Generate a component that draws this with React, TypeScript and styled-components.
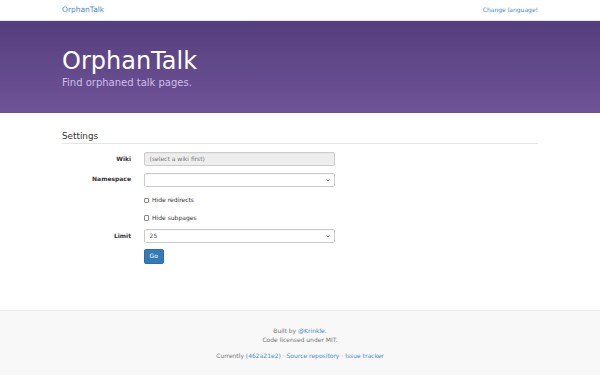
import styled, { createGlobalStyle } from 'styled-components'

const GlobalStyle = createGlobalStyle`
  html, body {
    margin: 0;
    padding: 0;
    background: #fff;
  }
  body {
    font-family: "DejaVu Sans", "Liberation Sans", sans-serif;
    font-size: 6px;
    line-height: 8.6px;
    color: #333;
  }
  * {
    box-sizing: border-box;
  }
`

const Page = styled.div`
  display: flex;
  flex-direction: column;
  min-height: 100vh;
`

const Container = styled.div`
  width: 476px;
  margin: 0 auto;
`

const Navbar = styled.nav`
  height: 21px;
  border-bottom: 1px solid #e7e7e7;
  background: #fff;
`

const NavInner = styled(Container)`
  display: flex;
  align-items: center;
  justify-content: space-between;
  height: 100%;
`

const Brand = styled.a`
  font-size: 7.5px;
  color: #4a8ac9;
  text-decoration: none;
`

const NavLink = styled.a`
  font-size: 6px;
  color: #4a8ac9;
  text-decoration: none;
`

const Jumbotron = styled.header`
  height: 92px;
  padding-top: 26.5px;
  background: linear-gradient(to bottom, #553e7d 0%, #6f5498 100%);
`

const Title = styled.h1`
  margin: 0;
  font-size: 24px;
  line-height: 26px;
  font-weight: normal;
  color: #fff;
`

const Lead = styled.p`
  margin: 2px 0 0;
  font-size: 10px;
  line-height: 13px;
  color: #cdbfe3;
`

const Main = styled.main`
  flex: 1;
  padding: 17px 0 45px;
`

const Legend = styled.h2`
  margin: 0 0 8.4px;
  font-size: 8.8px;
  line-height: 12.6px;
  font-weight: normal;
  color: #333;
  border-bottom: 1px solid #e5e5e5;
`

const FormRow = styled.div`
  display: grid;
  grid-template-columns: 69px 191px;
  column-gap: 12.6px;
  align-items: center;
  margin-bottom: 6.3px;
`

const Label = styled.label`
  text-align: right;
  font-weight: bold;
  color: #333;
`

const Control = styled.div<{ $disabled?: boolean }>`
  position: relative;
  height: 14.3px;
  padding: 0 5px;
  display: flex;
  align-items: center;
  border: 1px solid #ccc;
  border-radius: 1.8px;
  background: ${(p) => (p.$disabled ? '#eee' : '#fff')};
  color: ${(p) => (p.$disabled ? '#777' : '#555')};
  box-shadow: inset 0 0.5px 0.5px rgba(0, 0, 0, 0.075);
`

const Chevron = styled.svg`
  position: absolute;
  right: 3.5px;
  top: 50%;
  width: 4px;
  height: 2.5px;
  margin-top: -1px;
`

const CheckRow = styled.div`
  display: grid;
  grid-template-columns: 69px 191px;
  column-gap: 12.6px;
  padding-top: 2.9px;
  min-height: 11.3px;
  margin-bottom: 6.3px;
`

const CheckLabel = styled.label`
  grid-column: 2;
  display: flex;
  align-items: center;
  gap: 3px;
  color: #333;
`

const Box = styled.span`
  display: inline-block;
  width: 5.5px;
  height: 5.5px;
  border: 0.8px solid #888;
  border-radius: 1px;
  background: #fff;
`

const ButtonRow = styled.div`
  display: grid;
  grid-template-columns: 69px 191px;
  column-gap: 12.6px;
`

const Button = styled.button`
  grid-column: 2;
  justify-self: start;
  height: 14.3px;
  padding: 0 5px;
  font-family: inherit;
  font-size: 6px;
  line-height: 8.6px;
  color: #fff;
  background: #337ab7;
  border: 0.5px solid #2e6da4;
  border-radius: 1.8px;
`

const Footer = styled.footer`
  height: 65px;
  padding-top: 16px;
  background: #f8f8f8;
  border-top: 1px solid #eee;
  text-align: center;
  color: #777;
`

const FootLine = styled.p<{ $gap?: boolean }>`
  margin: ${(p) => (p.$gap ? '8px' : '0')} 0 0;
`

const FootLink = styled.a`
  color: #4a8ac9;
  text-decoration: none;
`

function SelectArrow() {
  return (
    <Chevron viewBox="0 0 10 6">
      <path d="M1 1l4 4 4-4" fill="none" stroke="#555" strokeWidth="1.8" />
    </Chevron>
  )
}

export default function App() {
  return (
    <Page>
      <GlobalStyle />
      <Navbar>
        <NavInner>
          <Brand href="#">OrphanTalk</Brand>
          <NavLink href="#">Change language!</NavLink>
        </NavInner>
      </Navbar>
      <Jumbotron>
        <Container>
          <Title>OrphanTalk</Title>
          <Lead>Find orphaned talk pages.</Lead>
        </Container>
      </Jumbotron>
      <Main>
        <Container>
          <Legend>Settings</Legend>
          <FormRow>
            <Label>Wiki</Label>
            <Control $disabled>(select a wiki first)</Control>
          </FormRow>
          <FormRow>
            <Label>Namespace</Label>
            <Control>
              <SelectArrow />
            </Control>
          </FormRow>
          <CheckRow>
            <CheckLabel>
              <Box />
              Hide redirects
            </CheckLabel>
          </CheckRow>
          <CheckRow>
            <CheckLabel>
              <Box />
              Hide subpages
            </CheckLabel>
          </CheckRow>
          <FormRow>
            <Label>Limit</Label>
            <Control>
              25
              <SelectArrow />
            </Control>
          </FormRow>
          <ButtonRow>
            <Button>Go</Button>
          </ButtonRow>
        </Container>
      </Main>
      <Footer>
        <FootLine>
          Built by <FootLink href="#">@Krinkle</FootLink>.
        </FootLine>
        <FootLine>Code licensed under MIT.</FootLine>
        <FootLine $gap>
          Currently <FootLink href="#">(462a21e2)</FootLink> · <FootLink href="#">Source repository</FootLink> ·{' '}
          <FootLink href="#">Issue tracker</FootLink>
        </FootLine>
      </Footer>
    </Page>
  )
}
